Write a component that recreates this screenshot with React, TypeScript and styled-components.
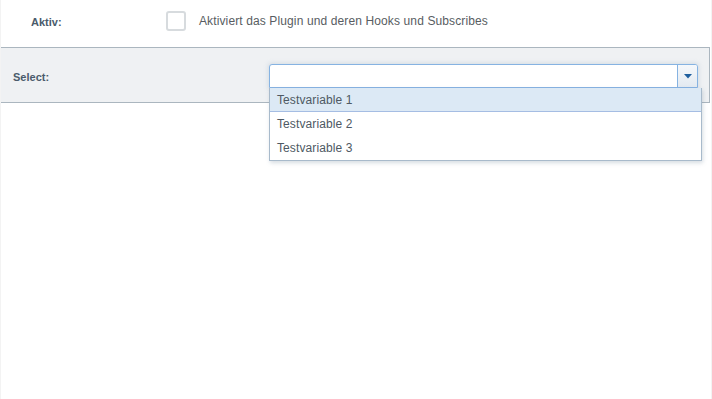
import React from "react";
import styled, { createGlobalStyle } from "styled-components";

const Global = createGlobalStyle`
  html, body { margin: 0; padding: 0; background: #fff; }
  body { font-family: "Liberation Sans", Arial, sans-serif; }
`;

const Page = styled.div`
  position: relative;
  width: 712px;
  height: 399px;
  box-sizing: border-box;
  border-left: 1px solid #f3f3f3;
  border-right: 1px solid #f3f3f3;
  overflow: hidden;
`;

const Row = styled.div`
  display: flex;
  align-items: center;
  height: 47px;
  box-sizing: border-box;
`;

const Label = styled.label<{ $width: number; $pad: number; $shift: number }>`
  width: ${(p) => p.$width}px;
  padding-left: ${(p) => p.$pad}px;
  margin-top: ${(p) => p.$shift}px;
  box-sizing: border-box;
  font-size: 11px;
  font-weight: bold;
  color: #4a5b6b;
  flex: none;
`;

const Checkbox = styled.span`
  width: 20px;
  height: 20px;
  box-sizing: border-box;
  border: 2px solid #d7dbde;
  border-radius: 3px;
  background: #fff;
  flex: none;
  margin-top: -5px;
`;

const Hint = styled.span`
  margin-left: 13px;
  margin-top: -5px;
  font-size: 12px;
  letter-spacing: 0.12px;
  color: #585d62;
`;

const Panel = styled.div`
  display: flex;
  align-items: center;
  height: 56px;
  margin-left: -1px;
  margin-right: 1px;
  box-sizing: border-box;
  border: 1px solid #abb6bf;
  background: #eff1f3;
`;

const SelectWrap = styled.div`
  position: relative;
  width: 429px;
  height: 24px;
  margin-top: 2px;
`;

const SelectBox = styled.div`
  display: flex;
  width: 100%;
  height: 100%;
  box-sizing: border-box;
  border: 1px solid #86b3e2;
  border-radius: 3px 3px 0 0;
  background: #fff;
  box-shadow: 0 0 4px 1px rgba(160, 180, 200, 0.35);
`;

const SelectInput = styled.div`
  flex: 1;
`;

const ArrowButton = styled.div`
  width: 19px;
  display: flex;
  align-items: center;
  justify-content: center;
  border-left: 1px solid #86b3e2;
  background: linear-gradient(#f5f8fb, #e3eaf1);
  border-radius: 0 2px 0 0;
`;

const List = styled.ul`
  position: absolute;
  top: 24px;
  left: 0;
  width: 433px;
  margin: 0;
  padding: 0;
  list-style: none;
  box-sizing: border-box;
  border: 1px solid #a8bacb;
  border-top: none;
  background: #fff;
  box-shadow: 1px 2px 4px rgba(120, 140, 160, 0.3);
  z-index: 2;
`;

const Item = styled.li<{ $active?: boolean }>`
  height: 24px;
  line-height: 25px;
  padding-left: 7px;
  font-size: 12px;
  letter-spacing: 0.1px;
  color: #4e5963;
  box-sizing: border-box;
  background: ${(p) => (p.$active ? "#dce9f5" : "#fff")};
  border-bottom: 1px solid ${(p) => (p.$active ? "#a5bde3" : "transparent")};
`;

export default function App() {
  return (
    <>
      <Global />
      <Page>
        <Row>
          <Label $width={165} $pad={30} $shift={-3}>Aktiv:</Label>
          <Checkbox />
          <Hint>Aktiviert das Plugin und deren Hooks und Subscribes</Hint>
        </Row>
        <Panel>
          <Label $width={268} $pad={12} $shift={4}>Select:</Label>
          <SelectWrap>
            <SelectBox>
              <SelectInput />
              <ArrowButton>
                <svg width="8" height="5" viewBox="0 0 8 5">
                  <path d="M0 0H8L4 4.5Z" fill="#1f5f9e" />
                </svg>
              </ArrowButton>
            </SelectBox>
            <List>
              <Item $active>Testvariable 1</Item>
              <Item>Testvariable 2</Item>
              <Item>Testvariable 3</Item>
            </List>
          </SelectWrap>
        </Panel>
      </Page>
    </>
  );
}
